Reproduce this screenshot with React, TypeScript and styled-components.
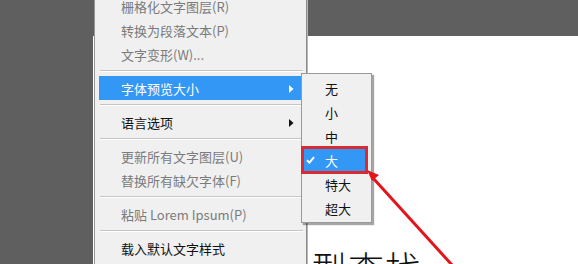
import React from "react";
import styled, { createGlobalStyle } from "styled-components";

const GlobalStyle = createGlobalStyle`
  html, body { margin: 0; padding: 0; background: #5f5f5f; }
  body { font-family: "Noto Sans CJK SC", "Noto Sans", sans-serif; }
`;

const Stage = styled.div`
  position: relative;
  width: 578px;
  height: 264px;
  overflow: hidden;
  display: grid;
  grid-template-columns: 93px 1fr;
  background: #5f5f5f;
`;

const LeftPane = styled.div`
  background: #5f5f5f;
`;

const RightPane = styled.div`
  display: flex;
  flex-direction: column;
`;

const TopBand = styled.div`
  height: 36px;
  flex: none;
  background: #5f5f5f;
`;

const Canvas = styled.div`
  flex: 1;
  background: #ffffff;
  padding: 213px 0 0 218px;
`;

const CanvasText = styled.div`
  font-family: "Noto Sans CJK SC", sans-serif;
  font-size: 36px;
  font-weight: 300;
  line-height: 1;
  letter-spacing: 1px;
  color: #111;
  white-space: nowrap;
`;

const Menu = styled.div`
  position: absolute;
  left: 94px;
  top: -10px;
  width: 213px;
  box-sizing: border-box;
  background: #f0f0f0;
  border: 1px solid #979797;
  border-right-color: #8a8a8a;
  padding: 3px 5px 3px 4px;
  display: flex;
  flex-direction: column;
  box-shadow: 1px 0 0 #b8b8b8;
`;

const Item = styled.div<{ $active?: boolean; $disabled?: boolean }>`
  height: 24px;
  box-sizing: border-box;
  padding: 1px 7px 0 22px;
  display: flex;
  align-items: center;
  justify-content: space-between;
  font-size: 13px;
  white-space: nowrap;
  background: ${(p) => (p.$active ? "#3397f6" : "transparent")};
  color: ${(p) => (p.$active ? "#ffffff" : p.$disabled ? "#7b7b7b" : "#111111")};
`;

const Separator = styled.div`
  height: 10px;
  display: flex;
  align-items: center;
  margin-left: 1px;
  margin-right: -2px;
  &::before {
    content: "";
    flex: 1;
    border-top: 1px solid #c4c4c4;
    border-bottom: 1px solid #ffffff;
  }
`;

const SubMenu = styled.div`
  position: absolute;
  left: 301px;
  top: 73px;
  width: 71px;
  box-sizing: border-box;
  background: #f0f0f0;
  border: 1px solid #9a9a9a;
  padding: 2px 5px 2px 1px;
  display: flex;
  flex-direction: column;
  box-shadow: 2px 2px 1px rgba(0, 0, 0, 0.35);
`;

const SubItem = styled.div<{ $active?: boolean }>`
  position: relative;
  height: 24px;
  box-sizing: border-box;
  padding: 1px 0 0 22px;
  display: flex;
  align-items: center;
  font-size: 13px;
  white-space: nowrap;
  background: ${(p) => (p.$active ? "#3397f6" : "transparent")};
  color: ${(p) => (p.$active ? "#ffffff" : "#111111")};
  outline: ${(p) => (p.$active ? "3px solid #dc2a2e" : "none")};
  outline-offset: -1px;
`;

const Check = styled.svg`
  position: absolute;
  left: 3px;
  top: 8px;
`;

const Overlay = styled.svg`
  position: absolute;
  left: 0;
  top: 0;
  pointer-events: none;
`;

const Arrow = ({ color }: { color: string }) => (
  <svg width="5" height="8" viewBox="0 0 5 8">
    <polygon points="0,0 4.5,4 0,8" fill={color} />
  </svg>
);

export default function App() {
  return (
    <>
      <GlobalStyle />
      <Stage>
        <LeftPane />
        <RightPane>
          <TopBand />
          <Canvas>
            <CanvasText>型查找</CanvasText>
          </Canvas>
        </RightPane>

        <Menu>
          <Item $disabled>栅格化文字图层(R)</Item>
          <Item $disabled>转换为段落文本(P)</Item>
          <Item $disabled>文字变形(W)...</Item>
          <Separator />
          <Item $active>
            字体预览大小
            <Arrow color="#ffffff" />
          </Item>
          <Separator />
          <Item>
            语言选项
            <Arrow color="#111111" />
          </Item>
          <Separator />
          <Item $disabled>更新所有文字图层(U)</Item>
          <Item $disabled>替换所有缺欠字体(F)</Item>
          <Separator />
          <Item $disabled>粘贴 Lorem Ipsum(P)</Item>
          <Separator />
          <Item>载入默认文字样式</Item>
          <Item>存储默认文字样式</Item>
        </Menu>

        <SubMenu>
          <SubItem>无</SubItem>
          <SubItem>小</SubItem>
          <SubItem>中</SubItem>
          <SubItem $active>
            <Check width="9" height="8" viewBox="0 0 9 8">
              <path d="M1 4.2 L3.4 6.6 L8 1.2" stroke="#ffffff" strokeWidth="2" fill="none" />
            </Check>
            大
          </SubItem>
          <SubItem>特大</SubItem>
          <SubItem>超大</SubItem>
        </SubMenu>

        <Overlay width="578" height="264" viewBox="0 0 578 264">
          <line x1="462" y1="276" x2="373" y2="178" stroke="#e3151a" strokeWidth="3" />
          <polygon points="367,170 379,175 372,181" fill="#e3151a" />
        </Overlay>
      </Stage>
    </>
  );
}
